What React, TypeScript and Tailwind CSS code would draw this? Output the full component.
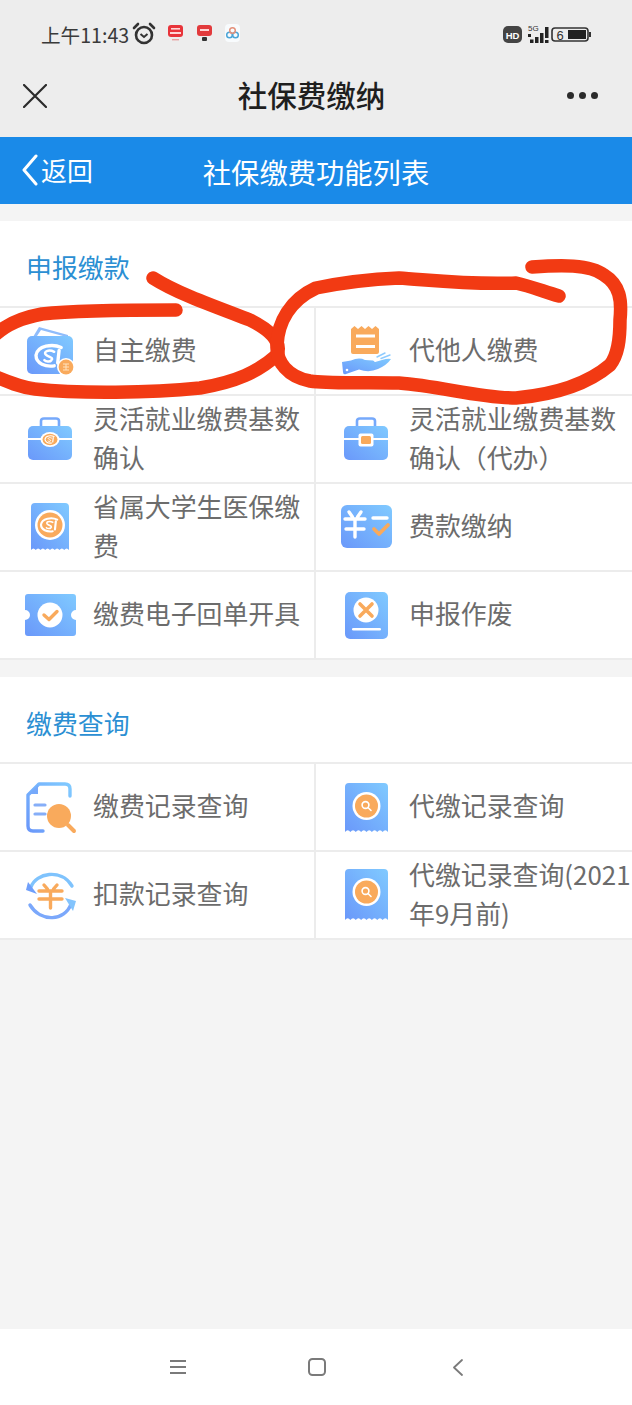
import type { ReactNode } from 'react'

const BLUE = 'url(#blueGrad)'
const ORANGE = '#f9aa5c'

function Icon({ children }: { children: ReactNode }) {
  return (
    <svg viewBox="0 0 60 60" className="w-[60px] h-[60px] shrink-0">
      {children}
    </svg>
  )
}

// 社保のロゴ(SIの渦)
function SiMark({ x, y, r, color }: { x: number; y: number; r: number; color: string }) {
  return (
    <g fill="none" stroke={color} strokeLinecap="round" transform={`translate(${x} ${y}) scale(${r / 10})`}>
      <path d="M8 -6 C2 -9 -9 -7.5 -10 -0.5 C-10 5.5 -3 8 3 7" strokeWidth="2.4" />
      <path d="M3 -3 C-1 -5 -5 -3 -3 -1 C-1 1 3 1 1 3 C0 4.5 -3 4 -4 3" strokeWidth="1.8" />
      <path d="M6.5 -4 L5.5 5" strokeWidth="2.4" />
    </g>
  )
}

function WalletIcon() {
  return (
    <Icon>
      <path d="M12 16 L18 6 L47 14 L47 19 Z" fill="#8fbcfb" />
      <path d="M16 15 L20 9 L42 15 Z" fill="#fff" />
      <rect x="6" y="15" width="46" height="38" rx="5" fill={BLUE} />
      <SiMark x={29} y={35} r={14} color="#fff" />
      <circle cx="45" cy="46" r="9" fill="#fff" />
      <circle cx="45" cy="46" r="7.4" fill={ORANGE} />
      <path d="M42 43 H48 M42 46 H48 M42 49 H48 M45 43 V49" stroke="#ffe2bd" strokeWidth="1" />
    </Icon>
  )
}

function CaseIcon({ logo }: { logo?: boolean }) {
  return (
    <Icon>
      <path d="M20 17 V12 Q20 9.5 23 9.5 H35 Q38 9.5 38 12 V17" fill="none" stroke="#76a9fb" strokeWidth="2.6" />
      <rect x="7" y="17" width="44" height="34" rx="5" fill={BLUE} />
      <rect x="7" y="29" width="44" height="2" fill="#fff" />
      {logo ? (
        <>
          <ellipse cx="29" cy="30.5" rx="9.5" ry="7.5" fill="#fff" />
          <ellipse cx="29" cy="30.5" rx="7.5" ry="5.8" fill={ORANGE} />
          <SiMark x={29} y={30.5} r={5} color="#fff" />
        </>
      ) : (
        <>
          <rect x="21.5" y="24.5" width="15" height="13" rx="2" fill="#fff" />
          <rect x="24" y="27" width="10" height="8" rx="1.5" fill={ORANGE} />
        </>
      )}
    </Icon>
  )
}

function ReceiptLogoIcon() {
  return (
    <Icon>
      <path d="M10 10 Q10 6 14 6 H44 Q48 6 48 10 V53 q-2.4 -3 -4.75 0 q-2.4 -3 -4.75 0 q-2.4 -3 -4.75 0 q-2.4 -3 -4.75 0 q-2.4 -3 -4.75 0 q-2.4 -3 -4.75 0 q-2.4 -3 -4.75 0 q-2.4 -3 -4.75 0 Z" fill={BLUE} />
      <circle cx="29" cy="28" r="15" fill="#fff" />
      <circle cx="29" cy="28" r="12.5" fill={ORANGE} />
      <SiMark x={29} y={28} r={9} color="#fff" />
    </Icon>
  )
}

function ReceiptSearchIcon({ top, bottom }: { top: number; bottom: number }) {
  const cy = top + 23
  return (
    <Icon>
      <path
        d={`M8 ${top + 4} Q8 ${top} 12 ${top} H47 Q51 ${top} 51 ${top + 4} V${bottom} ${'q-2.7 -3.4 -5.375 0 '.repeat(8)} Z`}
        fill={BLUE}
      />
      <circle cx="29.5" cy={cy} r="14" fill="#fff" />
      <circle cx="29.5" cy={cy} r="11.5" fill={ORANGE} />
      <circle cx="28.5" cy={cy - 1} r="3.4" fill="none" stroke="#fff" strokeWidth="1.6" />
      <path d={`M31 ${cy + 1.5} L34 ${cy + 4.5}`} stroke="#fff" strokeWidth="1.6" strokeLinecap="round" />
    </Icon>
  )
}

function HandIcon() {
  return (
    <Icon>
      <path d="M14 8 L17.5 5 L21 8 L24.5 5 L28 8 L31.5 5 L35 8 L38.5 5 L42 8 V31 Q42 33 40 33 H16 Q14 33 14 31 Z" fill={ORANGE} />
      <rect x="19" y="13.5" width="19" height="3" fill="#fff" />
      <rect x="19" y="24" width="19" height="3" fill="#fff" />
      <path d="M5 41 L14 39.5 Q22 36 28 39 L36 39.5 Q39 41 37 43 L28 44 L45 39 Q51 37 54 38 Q50 44 41 48 Q32 52 22 48.5 L9 53 Q6 54 6 51 Z" fill={BLUE} />
      <path d="M40 36 L48 32 M44 37.5 L53 34" stroke="#8ecbff" strokeWidth="1.4" strokeLinecap="round" />
      <circle cx="10" cy="49" r="1.3" fill="#fff" />
    </Icon>
  )
}

function TicketIcon() {
  return (
    <Icon>
      <path d="M7 9 H52 Q55 9 55 12 V25 A5 5 0 0 0 55 35 V48 Q55 51 52 51 H7 Q4 51 4 48 V35 A5 5 0 0 0 4 25 V12 Q4 9 7 9 Z" fill={BLUE} />
      <circle cx="29" cy="30" r="12.5" fill="#fff" />
      <path d="M23 30 L28 34.5 L36 26.5" fill="none" stroke={ORANGE} strokeWidth="3.4" strokeLinecap="round" strokeLinejoin="round" />
    </Icon>
  )
}

function BillIcon() {
  return (
    <Icon>
      <rect x="4" y="8" width="51" height="43" rx="6" fill={BLUE} />
      <path d="M12 15 L15.5 20 M24 15 L20.5 20 M8 22 H28 M9 32 H27 M18 22 V40" fill="none" stroke="#fff" strokeWidth="3.4" strokeLinecap="round" />
      <path d="M36 21 H50" stroke="#fff" strokeWidth="3.4" strokeLinecap="round" />
      <path d="M37 32 L42 37 L51 28" fill="none" stroke={ORANGE} strokeWidth="3.8" strokeLinecap="round" strokeLinejoin="round" />
    </Icon>
  )
}

function VoidIcon() {
  return (
    <Icon>
      <rect x="8" y="7" width="43" height="47" rx="5" fill={BLUE} />
      <circle cx="29" cy="25" r="12.5" fill="#fff" />
      <path d="M23 19 L35 31 M35 19 L23 31" stroke={ORANGE} strokeWidth="3.6" strokeLinecap="round" />
      <rect x="15" y="43" width="29" height="2.6" rx="1.3" fill="#fff" />
    </Icon>
  )
}

function RecordIcon() {
  return (
    <Icon>
      <path d="M22 54 H12 Q7 54 7 49 V18 L18 7 H44 Q49 7 49 12 V19" fill="none" stroke={BLUE} strokeWidth="3.4" strokeLinecap="round" strokeLinejoin="round" />
      <path d="M17 8 V17 H8 Z" fill="#76a9fb" />
      <path d="M14 28 H24 M14 37 H24" stroke="#86aef8" strokeWidth="3.2" strokeLinecap="round" />
      <circle cx="38" cy="39" r="12" fill={ORANGE} />
      <path d="M47 48 L53 54" stroke={ORANGE} strokeWidth="4" strokeLinecap="round" />
    </Icon>
  )
}

function RefundIcon() {
  return (
    <Icon>
      <path d="M10 22 C15 8 40 3 51 21" fill="none" stroke="#7fc3fd" strokeWidth="3.4" strokeLinecap="round" />
      <path d="M5 25 L16 29 L7 17 Z" fill="#6f9ffb" strokeLinejoin="round" />
      <path d="M50 39 C44 56 20 58 9 40" fill="none" stroke="#7ba8fb" strokeWidth="3.4" strokeLinecap="round" />
      <path d="M55 36 L44 33 L52 46 Z" fill="#83c4fd" />
      <path d="M23 20 L26.5 24 M36 20 L32.5 24 M18 26 H41 M18 34 H41 M29.5 26 V43" fill="none" stroke={ORANGE} strokeWidth="3.4" strokeLinecap="round" />
    </Icon>
  )
}

type Item = { icon: ReactNode; label: string }

function Cell({ item, left }: { item: Item; left: boolean }) {
  return (
    <div className={`h-[88px] flex items-center pl-[21px] gap-[12px] border-b-2 border-[#ececec] ${left ? 'border-r-2' : ''}`}>
      {item.icon}
      <span className="flex-1 min-w-0 -mt-[5px] text-[25.9px] leading-[39px] text-[#6c6c6c]">{item.label}</span>
    </div>
  )
}

function Section({ title, items }: { title: string; items: Item[] }) {
  return (
    <section className="bg-white">
      <div className="h-[87px] flex items-center pl-[26px] pt-[7px] border-b-2 border-[#ececec] text-[25.9px] text-[#2b8fd3]">{title}</div>
      <div className="grid grid-cols-2">
        {items.map((item, i) => (
          <Cell key={item.label} item={item} left={i % 2 === 0} />
        ))}
      </div>
    </section>
  )
}

const payItems: Item[] = [
  { icon: <WalletIcon />, label: '自主缴费' },
  { icon: <HandIcon />, label: '代他人缴费' },
  { icon: <CaseIcon logo />, label: '灵活就业缴费基数确认' },
  { icon: <CaseIcon />, label: '灵活就业缴费基数确认（代办）' },
  { icon: <ReceiptLogoIcon />, label: '省属大学生医保缴费' },
  { icon: <BillIcon />, label: '费款缴纳' },
  { icon: <TicketIcon />, label: '缴费电子回单开具' },
  { icon: <VoidIcon />, label: '申报作废' },
]

const queryItems: Item[] = [
  { icon: <RecordIcon />, label: '缴费记录查询' },
  { icon: <ReceiptSearchIcon top={6} bottom={55} />, label: '代缴记录查询' },
  { icon: <RefundIcon />, label: '扣款记录查询' },
  { icon: <ReceiptSearchIcon top={4} bottom={55} />, label: '代缴记录查询(2021年9月前)' },
]

function StatusBar() {
  return (
    <div className="h-[69px] flex items-center justify-between pl-[41px] pr-[40px]">
      <div className="flex items-center">
        <span className="text-[19.6px] text-[#3a3a3a] w-[92px]">上午11:43</span>
        <svg viewBox="0 0 24 24" className="w-[24px] h-[24px] -ml-[1px]" fill="none" stroke="#333" strokeWidth="2.6">
          <circle cx="12" cy="13" r="8" />
          <path d="M8.5 12 L12 15 L15.5 12" strokeWidth="2" />
          <path d="M2 6 L6 2 M22 6 L18 2" strokeLinecap="round" />
        </svg>
        <svg viewBox="0 0 100 20" className="w-[100px] h-[20px] ml-[11px]">
          <rect x="1" y="1" width="15" height="12" rx="3" fill="#e8343a" />
          <rect x="4" y="4" width="9" height="1.6" fill="#ffd5d5" />
          <rect x="3" y="8" width="11" height="2" fill="#ffd5d5" />
          <rect x="5" y="15" width="7" height="1.4" fill="#e8a0a0" />
          <rect x="30" y="1" width="15" height="11" rx="3" fill="#e23a3c" />
          <rect x="33" y="5" width="9" height="2" fill="#ffd5d5" />
          <rect x="35" y="13" width="5" height="4" rx="1" fill="#333" />
          <rect x="58" y="0" width="15" height="18" rx="4" fill="#f8fbfd" />
          <circle cx="62.5" cy="11" r="2.8" fill="none" stroke="#4ba5d8" strokeWidth="1.5" />
          <circle cx="68.5" cy="11" r="2.8" fill="none" stroke="#4ba5d8" strokeWidth="1.5" />
          <circle cx="65.5" cy="6.5" r="2.8" fill="none" stroke="#e4907a" strokeWidth="1.5" />
        </svg>
      </div>
      <svg viewBox="0 0 90 24" className="w-[90px] h-[24px]">
        <rect x="1" y="3" width="19" height="17" rx="5" fill="#444" />
        <text x="10.5" y="15.5" textAnchor="middle" fontSize="9.5" fontWeight="700" fill="#fff" fontFamily="Liberation Sans, sans-serif">HD</text>
        <text x="26" y="8" fontSize="8" fill="#333" fontFamily="Liberation Sans, sans-serif">5G</text>
        <rect x="26" y="11" width="3" height="3" fill="#222" />
        <rect x="28" y="16.5" width="3.5" height="3.5" fill="#222" />
        <rect x="33" y="14" width="3.5" height="6" fill="#222" />
        <rect x="38" y="10" width="3.5" height="10" fill="#222" />
        <rect x="43" y="4" width="3.5" height="11" fill="#222" />
        <rect x="43" y="17" width="3.5" height="3" fill="#222" />
        <rect x="50" y="5" width="36" height="13" rx="3" fill="none" stroke="#333" strokeWidth="1.6" />
        <rect x="66" y="7" width="18" height="9" fill="#222" />
        <rect x="87" y="9" width="2" height="5" fill="#333" />
        <text x="58" y="16.5" textAnchor="middle" fontSize="13" fill="#333" fontFamily="Liberation Sans, sans-serif">6</text>
      </svg>
    </div>
  )
}

// 手書きの赤い丸
function Scribbles() {
  return (
    <svg viewBox="0 0 632 1405" className="absolute inset-0 w-[632px] h-[1405px] pointer-events-none" fill="none" stroke="#f23a13" strokeWidth="13.5" strokeLinecap="round" strokeLinejoin="round">
      <path d="M176 310 C130 310 70 311 42 314 C20 318 4 326 -6 336" />
      <path d="M153 278 C175 292 205 303 250 320 C270 330 282 342 277 355 C258 372 236 382 200 388 C150 393 80 394 35 389 C20 387 8 382 -6 376" />
      <path d="M532 267 C560 265 590 264 604 275 C620 285 622 300 620 320 C620 340 618 355 610 365 C590 382 560 394 516 398 C480 398 440 386 399 383 C360 382 330 384 310 381 C288 377 276 362 277 345 C278 322 290 300 316 288 C345 282 375 279 399 278 C430 280 470 285 516 283 C530 286 545 292 559 296" />
    </svg>
  )
}

export default function App() {
  return (
    <div className="relative w-[632px] h-[1405px] overflow-hidden flex flex-col bg-[#f4f4f4] font-['Noto_Sans_CJK_SC','Noto_Sans',sans-serif]">
      <svg className="absolute w-0 h-0">
        <defs>
          <linearGradient id="blueGrad" x1="0" y1="1" x2="1" y2="0">
            <stop offset="0" stopColor="#6a98fa" />
            <stop offset="1" stopColor="#80caff" />
          </linearGradient>
        </defs>
      </svg>

      <header className="bg-[#ededed]">
        <StatusBar />
        <div className="h-[68px] grid grid-cols-[1fr_auto_1fr] items-center px-[23px] pb-[14px]">
          <svg viewBox="0 0 24 24" className="w-[24px] h-[24px]" fill="none" stroke="#2b2b2b" strokeWidth="2.2" strokeLinecap="round">
            <path d="M1 1 L23 23 M23 1 L1 23" />
          </svg>
          <div className="text-[29.5px] leading-[40px] font-medium text-[#1f1f1f] -ml-[9px] -mt-[4px]">社保费缴纳</div>
          <div className="flex justify-end gap-[5px] pr-[11px] -mt-[2px]">
            <span className="w-[7px] h-[7px] rounded-full bg-[#2b2b2b]" />
            <span className="w-[7px] h-[7px] rounded-full bg-[#2b2b2b]" />
            <span className="w-[7px] h-[7px] rounded-full bg-[#2b2b2b]" />
          </div>
        </div>
      </header>

      <div className="h-[67px] bg-[#1a8ae8] grid grid-cols-[1fr_auto_1fr] items-center pl-[22px] text-white">
        <div className="flex items-center gap-[3px]">
          <svg viewBox="0 0 16 32" className="w-[16px] h-[32px]" fill="none" stroke="#fff" strokeWidth="3" strokeLinecap="round" strokeLinejoin="round">
            <path d="M14 2 L2 16 L14 30" />
          </svg>
          <span className="text-[25.9px]">返回</span>
        </div>
        <div className="text-[28.3px] -ml-[22px] mt-[4px]">社保缴费功能列表</div>
        <div />
      </div>

      <div className="mt-[17px] flex flex-col gap-[17px]">
        <Section title="申报缴款" items={payItems} />
        <Section title="缴费查询" items={queryItems} />
      </div>

      <div className="flex-1" />

      <nav className="h-[76px] bg-white flex items-start gap-[122px] pl-[170px] pt-[29px]">
        <svg viewBox="0 0 16 14" className="w-[16px] h-[14px] mt-[2px]" stroke="#7a7a7a" strokeWidth="1.8">
          <path d="M0 1 H16 M0 7 H16 M0 13 H16" />
        </svg>
        <svg viewBox="0 0 18 18" className="w-[18px] h-[18px]" fill="none" stroke="#7a7a7a" strokeWidth="2">
          <rect x="1" y="1" width="16" height="16" rx="3.5" />
        </svg>
        <svg viewBox="0 0 11 17" className="w-[11px] h-[17px] mt-[1px] ml-[4px]" fill="none" stroke="#7a7a7a" strokeWidth="1.8" strokeLinecap="round" strokeLinejoin="round">
          <path d="M10 1 L2 8.5 L10 16" />
        </svg>
      </nav>

      <Scribbles />
    </div>
  )
}
